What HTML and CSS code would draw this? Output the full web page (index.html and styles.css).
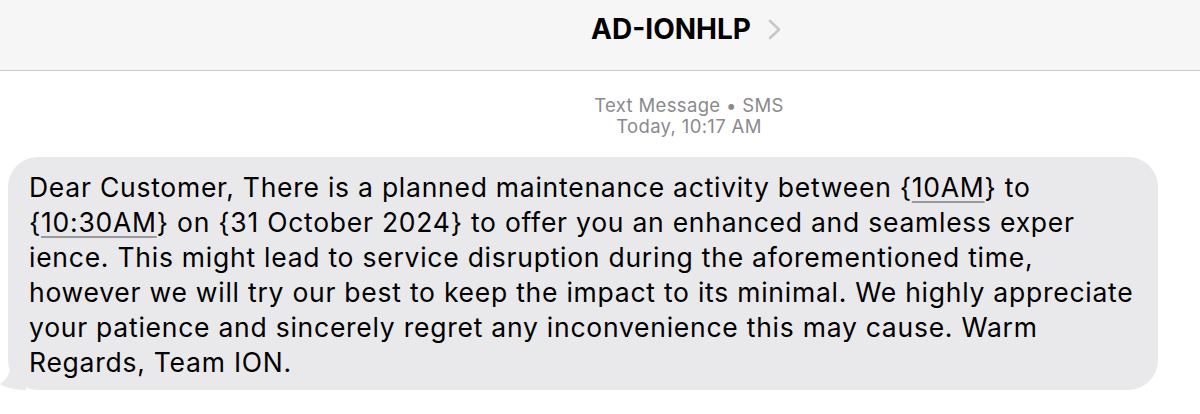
FILE: index.html
```html
<!DOCTYPE html>
<html>
<head>
<meta charset="utf-8">
<link rel="stylesheet" href="styles.css">
</head>
<body>
<header class="topbar">
  <div class="title-group">
    <span class="title">AD-IONHLP</span>
    <svg class="chevron" width="13" height="21" viewBox="0 0 13 21"><path d="M2 2 L11 10.5 L2 19" fill="none" stroke="#c7c7cc" stroke-width="2.6" stroke-linecap="round" stroke-linejoin="round"/></svg>
  </div>
</header>
<main class="thread">
  <div class="meta">
    <div>Text Message • SMS</div>
    <div>Today, 10:17 AM</div>
  </div>
  <div class="bubble-row">
    <div class="bubble">
      <p class="msg">Dear Customer, There is a planned maintenance activity between {<span class="det">10AM</span>} to<br>{<span class="det">10:30AM</span>} on {31 October 2024} to offer you an enhanced and seamless exper<br>ience. This might lead to service disruption during the aforementioned time,<br>however we will try our best to keep the impact to its minimal. We highly appreciate<br>your patience and sincerely regret any inconvenience this may cause. Warm<br>Regards, Team ION.</p>
      <svg class="tail" width="26" height="22" viewBox="0 0 26 22"><path d="M26 0 L26 22 C17 22 7 20 0 16 C6 12 10 6 10 0 Z" fill="#e9e9eb"/></svg>
    </div>
  </div>
</main>
</body>
</html>
```
FILE: styles.css
```css
* { box-sizing: border-box; }
html, body { margin: 0; padding: 0; background: #ffffff; }
body {
  width: 1200px;
  height: 414px;
  overflow: hidden;
  font-family: "Inter", "Liberation Sans", Arial, sans-serif;
  color: #000;
}
.topbar {
  height: 71px;
  background: #f6f6f6;
  border-bottom: 1px solid #c8c8ca;
  display: flex;
  justify-content: center;
  align-items: flex-start;
  padding-left: 172px;
  padding-top: 12px;
}
.title-group { display: flex; align-items: center; gap: 17px; }
.title {
  font-size: 28px;
  font-weight: 700;
  letter-spacing: 0;
}
.chevron { margin-top: 1px; }
.thread { display: flex; flex-direction: column; }
.meta {
  padding-top: 24px;
  padding-left: 178px;
  text-align: center;
  color: #8a8a8e;
  font-size: 18.5px;
  line-height: 21px;
  letter-spacing: 0.35px;
}
.bubble-row { padding: 20px 42px 0 8px; }
.bubble {
  position: relative;
  background: #e9e9eb;
  border-radius: 30px;
  padding: 13px 20px 0 21px;
  height: 233px;
}
.msg {
  margin: 0;
  font-size: 26.5px;
  line-height: 35px;
  letter-spacing: 0.75px;
}
.det {
  text-decoration: underline;
  text-decoration-color: #9a9a9e;
  text-decoration-thickness: 1.5px;
  text-underline-offset: 4px;
}
.tail { position: absolute; left: -8px; bottom: 0; }
```
